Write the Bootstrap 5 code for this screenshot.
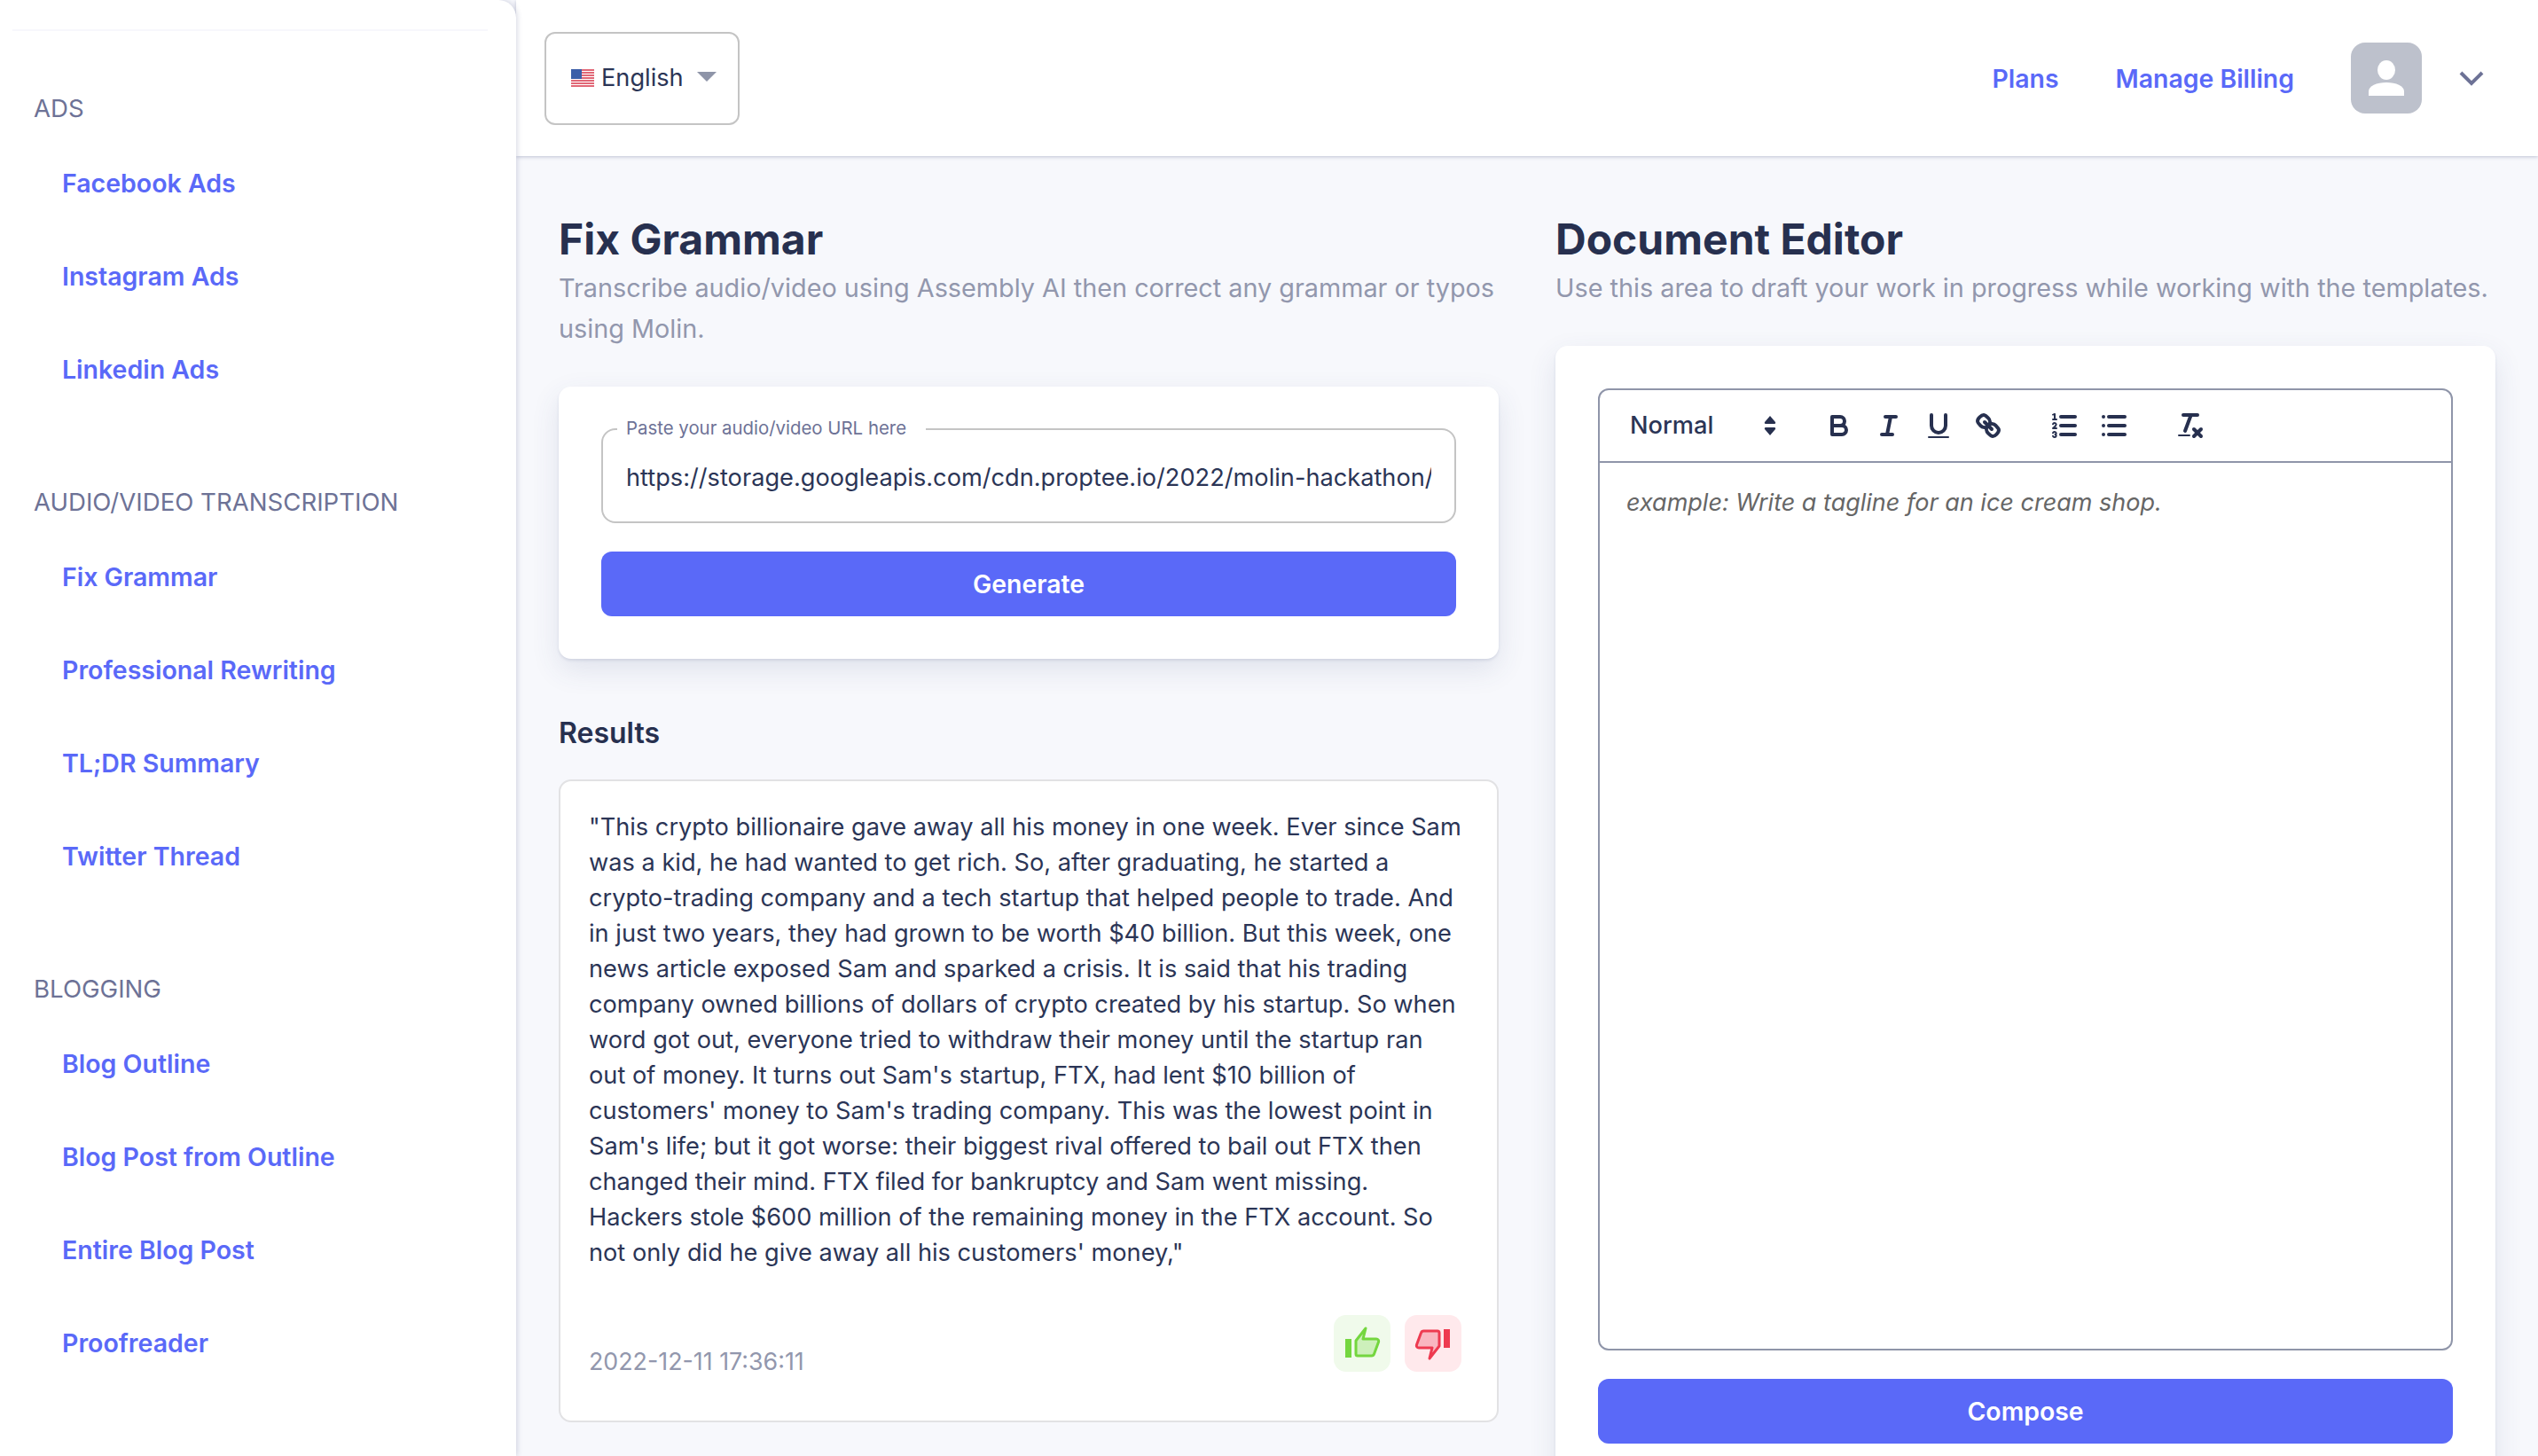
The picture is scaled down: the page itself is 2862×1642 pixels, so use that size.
<!DOCTYPE html>
<html lang="en">
<head>
    <meta charset="UTF-8">
    <meta name="viewport" content="width=device-width, initial-scale=1.0">
    <title>Fix Grammar</title>
    <link href="https://cdn.jsdelivr.net/npm/bootstrap@5.3.0/dist/css/bootstrap.min.css" rel="stylesheet">
    <style>
        html, body { height: 1642px; overflow: hidden; }
        body {
            font-family: 'Inter', 'Liberation Sans', sans-serif;
            font-size: 27.2px;
            color: #2b3556;
            background: #f7f8fc;
        }
        .side-panel {
            width: 582px;
            height: 1642px;
            flex: none;
            background: #fff;
            border-top-right-radius: 20px;
            box-shadow: 1px 0 6px rgba(60, 70, 120, .22);
            padding: 33px 32px 0 14px;
            position: relative;
            z-index: 2;
        }
        .side-rule { height: 2px; background: #f7f7fc; }
        .side-head {
            height: 65px;
            margin: 64px 0 0 24px;
            display: flex;
            align-items: center;
            color: #6d7296;
            font-size: 27.6px;
            line-height: 1;
            text-transform: uppercase;
        }
        .side-head.first-head { margin-top: 55px; }
        .side-link {
            height: 105px;
            padding: 0 0 0 56px;
            display: flex;
            align-items: center;
            color: #5a69f8;
            font-size: 28.5px;
            font-weight: 600;
            text-decoration: none;
        }
        .top-bar {
            height: 176px;
            padding: 0 60px 0 32px;
            background: #fff;
            box-shadow: 0 1px 4px rgba(60, 70, 120, .3);
            position: relative;
            z-index: 1;
        }
        .lang-btn {
            width: 220px;
            height: 105px;
            padding: 0 0 0 28px;
            background: #fff;
            border: 2px solid #c4c4c4;
            border-radius: 12px;
            font-size: 27.2px;
            color: #2b3556;
        }
        .lang-caret {
            width: 0;
            height: 0;
            margin-left: 15px;
            margin-bottom: 4px;
            border-left: 11px solid transparent;
            border-right: 11px solid transparent;
            border-top: 11px solid #8e94a8;
        }
        .top-link {
            color: #5a69f8;
            font-size: 28.4px;
            font-weight: 600;
            text-decoration: none;
            margin-right: 64px;
            padding-top: 2px;
        }
        .user-pic {
            width: 80px;
            height: 80px;
            background: #bdc1cc;
            border-radius: 16px;
        }
        .user-arrow { margin: 2px 0 0 41px; }
        .work-area {
            display: grid;
            grid-template-columns: 1060px 1060px;
            column-gap: 64px;
            padding: 64px 48px 0 48px;
        }
        .page-title {
            font-size: 48px;
            line-height: 60px;
            font-weight: 700;
            margin: 0;
            color: #27304f;
        }
        .page-sub {
            margin: 2px 0 0;
            line-height: 46px;
            color: #9297ad;
            font-size: 28.8px;
        }
        .white-card {
            background: #fff;
            border: 0;
            border-radius: 14px;
            box-shadow: 0 12px 32px rgba(60, 70, 120, .12), 0 2px 3px rgba(60, 70, 120, .12);
            padding: 48px;
        }
        .left-card { margin-top: 42px; }
        .url-field {
            height: 118px;
            border: 2px solid #c4c4c4;
            border-radius: 16px;
            padding: 0 26px;
            margin: -12px 0 32px;
        }
        .url-field legend {
            float: none;
            width: auto;
            font-size: 20.4px;
            line-height: 22px;
            height: 24px;
            margin: 0 0 0 -10px;
            padding: 0 22px 0 10px;
            color: #6d7296;
        }
        .url-field input {
            border: 0;
            padding: 0;
            margin-top: 14px;
            height: 56px;
            font-size: 27.2px;
            color: #2b3556;
            background: transparent;
            border-radius: 0;
        }
        .go-btn {
            height: 73px;
            background: #5a69f8;
            border: 0;
            border-radius: 12px;
            color: #fff;
            font-size: 28.4px;
            font-weight: 600;
            padding: 2px 0 0;
        }
        .go-btn:hover { background: #4c5ae6; color: #fff; }
        .results-title {
            font-size: 32px;
            line-height: 40px;
            font-weight: 600;
            margin: 64px 0 32px;
            color: #27304f;
        }
        .result-box {
            height: 725px;
            background: #fff;
            border: 2px solid #e2e2e4;
            border-radius: 14px;
            padding: 32px 32px 0;
        }
        .result-text { line-height: 40px; margin: 0; height: 570px; padding-right: 5px; }
        .time-stamp { color: #9297ad; font-size: 26.8px; line-height: 40px; margin-top: 32px; }
        .vote-btn {
            width: 64px;
            height: 64px;
            padding: 0;
            border: 0;
            border-radius: 14px;
            display: block;
        }
        .vote-up { background: #f0faeb; }
        .vote-down { background: #ffe9ec; }
        .vote-row { margin: 0 8px 0 0; }
        .editor-card { height: 1400px; margin-top: 42px; padding-top: 48px; }
        .editor-box {
            height: 1085px;
            border: 2px solid #8f95a9;
            border-radius: 12px;
            margin-bottom: 32px;
        }
        .editor-tools {
            height: 82px;
            padding: 0 16px;
            border-bottom: 2px solid #8f95a9;
        }
        .style-pick {
            width: 196px;
            margin-right: 30px;
            padding: 0 12px 0 18px;
            font-weight: 500;
        }
        .tool-btn {
            width: 56px;
            height: 48px;
            padding: 0;
            border: 0;
            background: transparent;
        }
        .tool-btn svg { width: 36px; height: 36px; display: block; margin: 6px auto; }
        .tool-gap { width: 30px; }
        .ql-s { fill: none; stroke: #27304f; stroke-width: 2; stroke-linecap: round; stroke-linejoin: round; }
        .ql-t { fill: none; stroke: #27304f; stroke-width: 1; stroke-linecap: round; stroke-linejoin: round; }
        .ql-f { fill: #27304f; }
        .editor-text {
            padding: 24px 30px;
            font-size: 27px;
            line-height: 42px;
            font-style: italic;
            color: #666;
        }
    </style>
</head>
<body>
<div class="d-flex">
    <aside class="side-panel">
        <div class="side-rule"></div>
        <div class="side-head first-head">Ads</div>
        <nav class="d-flex flex-column">
            <a class="side-link" href="#">Facebook Ads</a>
            <a class="side-link" href="#">Instagram Ads</a>
            <a class="side-link" href="#">Linkedin Ads</a>
        </nav>
        <div class="side-head">Audio/Video Transcription</div>
        <nav class="d-flex flex-column">
            <a class="side-link" href="#">Fix Grammar</a>
            <a class="side-link" href="#">Professional Rewriting</a>
            <a class="side-link" href="#">TL;DR Summary</a>
            <a class="side-link" href="#">Twitter Thread</a>
        </nav>
        <div class="side-head">Blogging</div>
        <nav class="d-flex flex-column">
            <a class="side-link" href="#">Blog Outline</a>
            <a class="side-link" href="#">Blog Post from Outline</a>
            <a class="side-link" href="#">Entire Blog Post</a>
            <a class="side-link" href="#">Proofreader</a>
        </nav>
    </aside>

    <main class="flex-grow-1">
        <header class="top-bar d-flex align-items-center justify-content-between">
            <button class="lang-btn d-flex align-items-center" type="button">
                <svg width="26" height="20" viewBox="0 0 26 20" class="me-2 flex-shrink-0">
                    <rect width="26" height="20" fill="#fff"/>
                    <path d="M0 1h26M0 4h26M0 7h26M0 10h26M0 13h26M0 16h26M0 19h26" stroke="#d8364a" stroke-width="1.6"/>
                    <rect width="12" height="11" fill="#3b5ea8"/>
                </svg>
                <span>English</span>
                <span class="lang-caret"></span>
            </button>
            <div class="d-flex align-items-center">
                <a class="top-link" href="#">Plans</a>
                <a class="top-link" href="#">Manage Billing</a>
                <div class="user-pic">
                    <svg width="80" height="80" viewBox="0 0 80 80">
                        <ellipse cx="40" cy="31" rx="10" ry="11" fill="#fff"/>
                        <path d="M20 60v-5c0-6 9-10 20-10s20 4 20 10v5z" fill="#fff"/>
                    </svg>
                </div>
                <svg class="user-arrow" width="30" height="20" viewBox="0 0 30 20">
                    <path d="M3 3l12 12L27 3" fill="none" stroke="#6d7296" stroke-width="4"/>
                </svg>
            </div>
        </header>

        <div class="work-area">
            <section>
                <h1 class="page-title">Fix Grammar</h1>
                <p class="page-sub">Transcribe audio/video using Assembly AI then correct any grammar or typos using Molin.</p>
                <div class="white-card left-card">
                    <fieldset class="url-field">
                        <legend>Paste your audio/video URL here</legend>
                        <input class="form-control" type="text" value="https://storage.googleapis.com/cdn.proptee.io/2022/molin-hackathon/">
                    </fieldset>
                    <button class="btn go-btn w-100" type="button">Generate</button>
                </div>
                <h2 class="results-title">Results</h2>
                <div class="result-box">
                    <p class="result-text">"This crypto billionaire gave away all his money in one week. Ever since Sam was a kid, he had wanted to get rich. So, after graduating, he started a crypto-trading company and a tech startup that helped people to trade. And in just two years, they had grown to be worth $40 billion. But this week, one news article exposed Sam and sparked a crisis. It is said that his trading company owned billions of dollars of crypto created by his startup. So when word got out, everyone tried to withdraw their money until the startup ran out of money. It turns out Sam's startup, FTX, had lent $10 billion of customers' money to Sam's trading company. This was the lowest point in Sam's life; but it got worse: their biggest rival offered to bail out FTX then changed their mind. FTX filed for bankruptcy and Sam went missing. Hackers stole $600 million of the remaining money in the FTX account. So not only did he give away all his customers' money,"</p>
                    <div class="d-flex justify-content-between align-items-start">
                        <span class="time-stamp">2022-12-11 17:36:11</span>
                        <div class="d-flex gap-3 vote-row">
                            <button class="vote-btn vote-up" type="button" aria-label="Good result">
                                <svg width="64" height="64" viewBox="0 0 64 64">
                                    <rect x="13" y="27" width="7" height="21" fill="#74d63f"/>
                                    <path d="M25 29L36 15l-3 12h15c2 0 3 1.500 2.500 3.500L45.500 44c-.5 1.500-1.500 2-3 2H27c-1.500 0-2-1-2-2z" fill="#cdf0bb" stroke="#74d63f" stroke-width="3" stroke-linejoin="round"/>
                                </svg>
                            </button>
                            <button class="vote-btn vote-down" type="button" aria-label="Bad result">
                                <svg width="64" height="64" viewBox="0 0 64 64">
                                    <rect x="44" y="16" width="7" height="21" fill="#ee3a50"/>
                                    <path d="M39 35L28 49l3-12H16c-2 0-3-1.500-2.500-3.500L18.500 20c.5-1.500 1.500-2 3-2H37c1.500 0 2 1 2 2z" fill="#f9b6c0" stroke="#ee3a50" stroke-width="3" stroke-linejoin="round"/>
                                </svg>
                            </button>
                        </div>
                    </div>
                </div>
            </section>

            <section>
                <h1 class="page-title">Document Editor</h1>
                <p class="page-sub">Use this area to draft your work in progress while working with the templates.</p>
                <div class="white-card editor-card">
                    <div class="editor-box">
                        <div class="editor-tools d-flex align-items-center">
                            <div class="style-pick d-flex align-items-center justify-content-between">
                                <span>Normal</span>
                                <svg width="16" height="24" viewBox="0 0 16 24">
                                    <path class="ql-f" d="M8 1l6 7c.5 1 0 2-1 2H3c-1 0-1.500-1-1-2zM8 23l6-7c.5-1 0-2-1-2H3c-1 0-1.500 1-1 2z"/>
                                </svg>
                            </div>
                            <button class="tool-btn" type="button" aria-label="Bold">
                                <svg viewBox="0 0 18 18"><path class="ql-s" d="M5,4H9.500A2.500,2.500,0,0,1,12,6.500v0A2.500,2.500,0,0,1,9.500,9H5V4Z"/><path class="ql-s" d="M5,9h5.500A2.500,2.500,0,0,1,13,11.500v0A2.500,2.500,0,0,1,10.500,14H5V9Z"/></svg>
                            </button>
                            <button class="tool-btn" type="button" aria-label="Italic">
                                <svg viewBox="0 0 18 18"><line class="ql-s" x1="7" x2="13" y1="4" y2="4"/><line class="ql-s" x1="5" x2="11" y1="14" y2="14"/><line class="ql-s" x1="8" x2="10" y1="14" y2="4"/></svg>
                            </button>
                            <button class="tool-btn" type="button" aria-label="Underline">
                                <svg viewBox="0 0 18 18"><path class="ql-s" d="M5,3V9a4.012,4.012,0,0,0,4,4H9a4.012,4.012,0,0,0,4-4V3"/><rect class="ql-f" height="1" rx=".5" ry=".5" width="12" x="3" y="15"/></svg>
                            </button>
                            <button class="tool-btn" type="button" aria-label="Link">
                                <svg viewBox="0 0 18 18"><line class="ql-s" x1="7" x2="11" y1="7" y2="11"/><path class="ql-s" d="M8.900,4.577a3.476,3.476,0,0,1,.36,4.679A3.476,3.476,0,0,1,4.577,8.900C3.185,7.500,2.035,6.400,4.217,4.217S7.500,3.185,8.900,4.577Z"/><path class="ql-s" d="M13.423,9.100a3.476,3.476,0,0,0-4.679-.36,3.476,3.476,0,0,0,.36,4.679c1.392,1.392,2.500,2.542,4.679.36S14.815,10.500,13.423,9.100Z"/></svg>
                            </button>
                            <div class="tool-gap"></div>
                            <button class="tool-btn" type="button" aria-label="Ordered list">
                                <svg viewBox="0 0 18 18"><line class="ql-s" x1="7" x2="15" y1="4" y2="4"/><line class="ql-s" x1="7" x2="15" y1="9" y2="9"/><line class="ql-s" x1="7" x2="15" y1="14" y2="14"/><line class="ql-t" x1="2.500" x2="4.500" y1="5.500" y2="5.500"/><path class="ql-f" d="M3.500,6A0.500,0.500,0,0,1,3,5.500V3.085l-0.276.138A0.500,0.500,0,0,1,2.053,3c-0.124-.247-0.023-0.324.224-0.447l1-.5A0.500,0.500,0,0,1,4,2.500v3A0.500,0.500,0,0,1,3.500,6Z"/><path class="ql-t" d="M4.500,10.500h-2c0-.234,1.850-1.076,1.850-2.234A0.959,0.959,0,0,0,2.500,8.156"/><path class="ql-t" d="M2.500,14.846a0.959,0.959,0,0,0,1.850-.109A0.700,0.700,0,0,0,3.750,14a0.688,0.688,0,0,0,.6-0.736,0.959,0.959,0,0,0-1.850-.109"/></svg>
                            </button>
                            <button class="tool-btn" type="button" aria-label="Bullet list">
                                <svg viewBox="0 0 18 18"><line class="ql-s" x1="6" x2="15" y1="4" y2="4"/><line class="ql-s" x1="6" x2="15" y1="9" y2="9"/><line class="ql-s" x1="6" x2="15" y1="14" y2="14"/><line class="ql-s" x1="3" x2="3" y1="4" y2="4"/><line class="ql-s" x1="3" x2="3" y1="9" y2="9"/><line class="ql-s" x1="3" x2="3" y1="14" y2="14"/></svg>
                            </button>
                            <div class="tool-gap"></div>
                            <button class="tool-btn" type="button" aria-label="Clear formatting">
                                <svg viewBox="0 0 18 18"><line class="ql-s" x1="5" x2="13" y1="3" y2="3"/><line class="ql-s" x1="6" x2="9.350" y1="12" y2="3"/><line class="ql-s" x1="11" x2="15" y1="11" y2="15"/><line class="ql-s" x1="15" x2="11" y1="11" y2="15"/><rect class="ql-f" height="1" rx=".5" ry=".5" width="7" x="2" y="14"/></svg>
                            </button>
                        </div>
                        <div class="editor-text">example: Write a tagline for an ice cream shop.</div>
                    </div>
                    <button class="btn go-btn w-100" type="button">Compose</button>
                </div>
            </section>
        </div>
    </main>
</div>
<script src="https://cdn.jsdelivr.net/npm/bootstrap@5.3.0/dist/js/bootstrap.bundle.min.js"></script>
</body>
</html>
